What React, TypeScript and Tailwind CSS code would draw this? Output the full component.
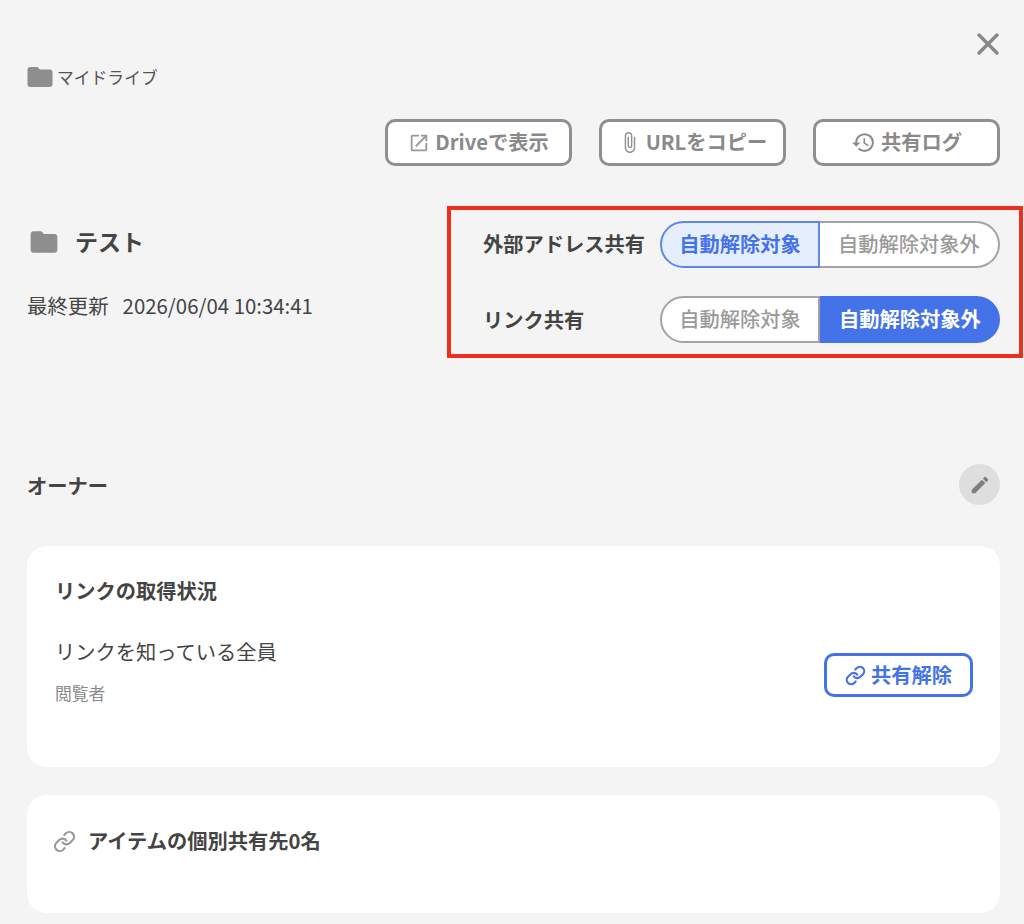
import { Link, X } from 'lucide-react';
import { MdAttachFile, MdEdit, MdFolder, MdHistory, MdOpenInNew } from 'react-icons/md';

const actions = [
  { label: 'Driveで表示', icon: <MdOpenInNew size={22} className="text-[#9a9a9a]" /> },
  { label: 'URLをコピー', icon: <MdAttachFile size={23} className="text-[#8f8f8f]" /> },
  { label: '共有ログ', icon: <MdHistory size={25} className="text-[#8a8a8a]" /> },
];

function Toggle({ active }: { active: 'left' | 'right' }) {
  return (
    <div className="flex h-[47px] w-[340px] text-[20.25px] font-medium">
      {active === 'left' ? (
        <>
          <div className="flex w-[160px] items-center justify-center rounded-l-full border-2 border-[#5f86ec] bg-[#e4eefc] font-bold text-[#4472e8]">
            自動解除対象
          </div>
          <div className="flex w-[180px] items-center justify-center rounded-r-full border-2 border-l-0 border-[#a3a3a3] bg-white text-[#9a9a9a]">
            自動解除対象外
          </div>
        </>
      ) : (
        <>
          <div className="flex w-[160px] items-center justify-center rounded-l-full border-2 border-[#a3a3a3] bg-white text-[#9a9a9a]">
            自動解除対象
          </div>
          <div className="flex w-[180px] items-center justify-center rounded-r-full bg-[#4472e8] font-bold text-white">
            自動解除対象外
          </div>
        </>
      )}
    </div>
  );
}

export default function App() {
  return (
    <div className="h-[924px] overflow-hidden bg-[#f4f4f4] pl-[27px] pr-[24px] font-['Noto_Sans_CJK_JP','Noto_Sans',sans-serif] text-[#444444]">
      <div className="flex justify-end pt-[26px]">
        <X size={36} strokeWidth={2.25} className="mr-[-6px] text-[#888888]" />
      </div>

      <div className="mt-[3px] flex h-[24px] items-center gap-[2px] text-[16.8px] leading-none text-[#555555]">
        <MdFolder size={30} className="ml-[-2px] text-[#8e8e8e]" />
        <span>マイドライブ</span>
      </div>

      <div className="mt-[30px] flex justify-end gap-[27px]">
        {actions.map((action) => (
          <div
            key={action.label}
            className="flex h-[47px] w-[187px] items-center justify-center gap-[5px] rounded-[10px] border-[3px] border-[#8f8f8f] bg-white text-[20.25px] font-bold text-[#8a8a8a]"
          >
            {action.icon}
            <span>{action.label}</span>
          </div>
        ))}
      </div>

      <div className="mt-[40px] flex justify-between">
        <div className="pt-[17px]">
          <div className="flex h-[36px] items-center gap-[16px] pt-[1px]">
            <MdFolder size={32} className="ml-[1px] text-[#8e8e8e]" />
            <span className="ml-[-1px] text-[23px] font-bold leading-none">テスト</span>
          </div>
          <div className="mt-[36px] flex items-center gap-[14px] text-[20.4px] leading-none">
            <span>最終更新</span>
            <span>2026/06/04 10:34:41</span>
          </div>
        </div>

        <div className="mr-[-23px] flex h-[152px] w-[576px] flex-col gap-[28px] border-4 border-[#ee2f20] pl-[32px] pr-[19px] pt-[11px]">
          <div className="flex items-center justify-between">
            <span className="text-[20.25px] font-bold">外部アドレス共有</span>
            <Toggle active="left" />
          </div>
          <div className="flex items-center justify-between">
            <span className="pt-[1px] text-[20.25px] font-bold">リンク共有</span>
            <Toggle active="right" />
          </div>
        </div>
      </div>

      <div className="mt-[106px] flex h-[41px] items-center justify-between">
        <span className="pt-[3px] text-[20.25px] font-bold">オーナー</span>
        <div className="flex h-[41px] w-[41px] items-center justify-center rounded-full bg-[#dedede]">
          <MdEdit size={22} className="text-[#7f7f7f]" />
        </div>
      </div>

      <div className="mt-[41px] flex h-[221px] flex-col rounded-[20px] bg-white pl-[28px] pr-[27px] pt-[30px]">
        <div className="text-[20.25px] font-bold leading-[30px]">リンクの取得状況</div>
        <div className="mt-[31px] flex items-start justify-between">
          <div>
            <div className="text-[20.25px] leading-[30px]">リンクを知っている全員</div>
            <div className="mt-[14px] text-[16.8px] leading-[24px] text-[#8a8a8a]">閲覧者</div>
          </div>
          <div className="mt-[16px] flex h-[44px] w-[149px] items-center justify-center gap-[5px] rounded-[10px] border-[3px] border-[#4472e8] bg-white text-[20.25px] font-bold text-[#4472e8]">
            <Link size={21} strokeWidth={2.5} />
            <span>共有解除</span>
          </div>
        </div>
      </div>

      <div className="mt-[28px] h-[118px] rounded-[20px] bg-white pl-[26px] pt-[31px]">
        <div className="flex items-center gap-[12px]">
          <Link size={23} strokeWidth={2.25} className="text-[#999999]" />
          <span className="text-[20.25px] font-bold leading-[30px]">アイテムの個別共有先0名</span>
        </div>
      </div>
    </div>
  );
}
